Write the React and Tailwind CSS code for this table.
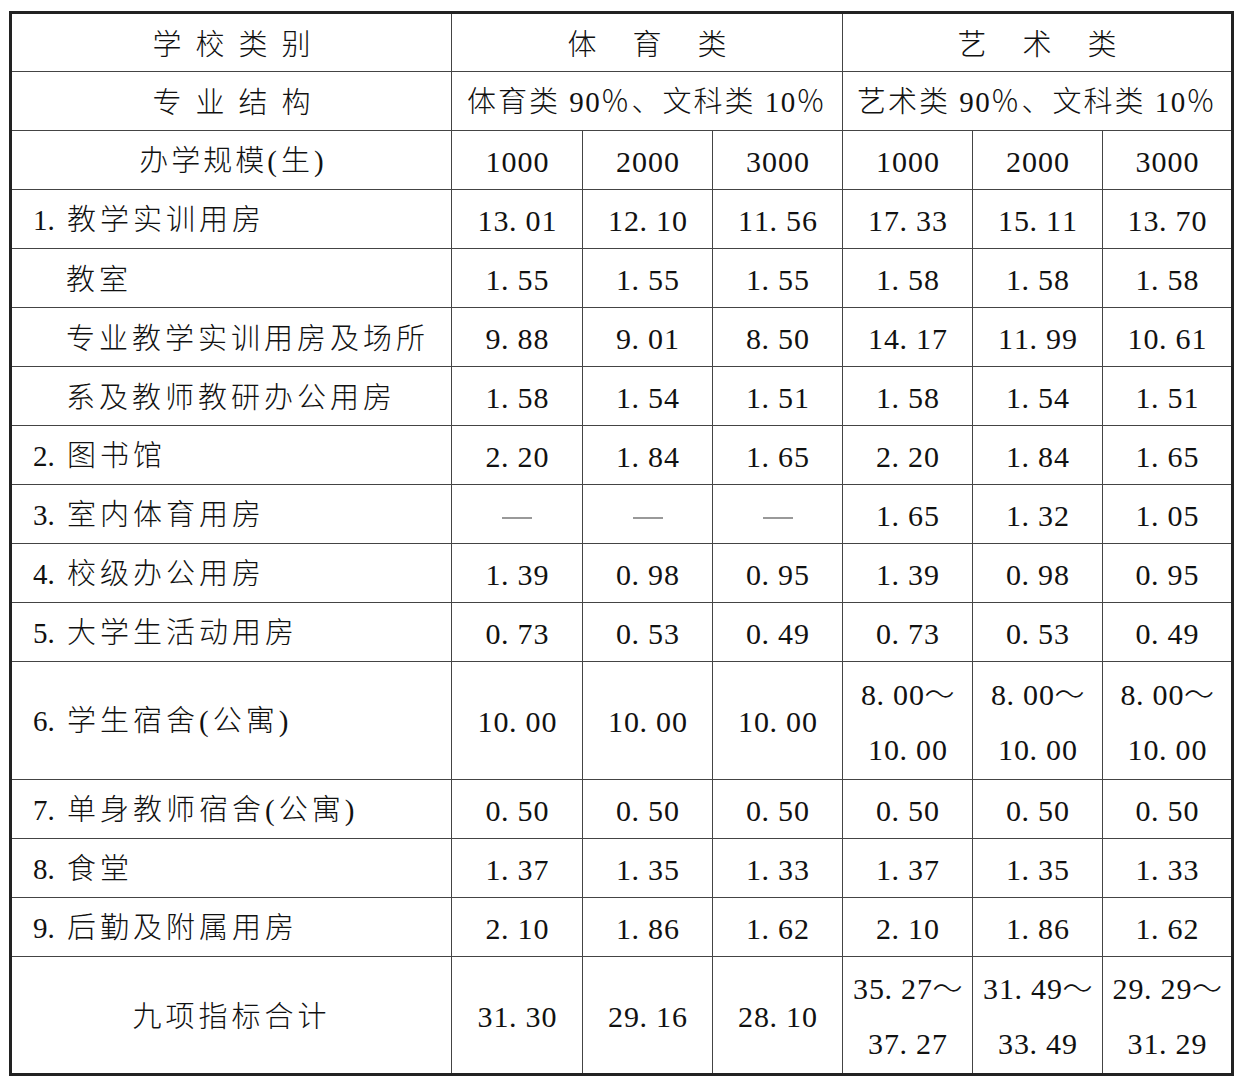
import React from "react";

// 每行数据: label, 缩进, 六个数值
const rows = [
  { no: "1.", label: "教学实训用房", v: ["13.01", "12.10", "11.56", "17.33", "15.11", "13.70"] },
  { label: "教室", indent: true, v: ["1.55", "1.55", "1.55", "1.58", "1.58", "1.58"] },
  { label: "专业教学实训用房及场所", indent: true, v: ["9.88", "9.01", "8.50", "14.17", "11.99", "10.61"] },
  { label: "系及教师教研办公用房", indent: true, v: ["1.58", "1.54", "1.51", "1.58", "1.54", "1.51"] },
  { no: "2.", label: "图书馆", v: ["2.20", "1.84", "1.65", "2.20", "1.84", "1.65"] },
  { no: "3.", label: "室内体育用房", v: ["-", "-", "-", "1.65", "1.32", "1.05"] },
  { no: "4.", label: "校级办公用房", v: ["1.39", "0.98", "0.95", "1.39", "0.98", "0.95"] },
  { no: "5.", label: "大学生活动用房", v: ["0.73", "0.53", "0.49", "0.73", "0.53", "0.49"] },
  {
    no: "6.",
    label: "学生宿舍",
    paren: "公寓",
    tall: true,
    v: ["10.00", "10.00", "10.00", ["8.00～", "10.00"], ["8.00～", "10.00"], ["8.00～", "10.00"]],
  },
  { no: "7.", label: "单身教师宿舍", paren: "公寓", v: ["0.50", "0.50", "0.50", "0.50", "0.50", "0.50"] },
  { no: "8.", label: "食堂", v: ["1.37", "1.35", "1.33", "1.37", "1.35", "1.33"] },
  { no: "9.", label: "后勤及附属用房", v: ["2.10", "1.86", "1.62", "2.10", "1.86", "1.62"] },
];

const serif = "[font-family:'Liberation_Serif',serif] font-normal";

const Num = ({ text }) => (
  <span className={`inline-flex items-baseline tracking-normal ${serif}`}>
    {text.split("").map((c, i) =>
      c === "～" ? (
        <span key={i} className="[font-family:'Noto_Sans_CJK_SC',sans-serif] font-light">～</span>
      ) : c === "." ? (
        <span key={i} className="inline-block w-[16px] text-left">.</span>
      ) : (
        <span key={i} className="inline-block w-[16px] text-center">{c}</span>
      )
    )}
  </span>
);

const Value = ({ v }) => {
  if (v === "-") return <span className="inline-block w-[30px] h-[2px] bg-[#999] align-middle" />;
  if (Array.isArray(v))
    return (
      <div className="flex flex-col items-center gap-[10px] leading-[45px]">
        <Num text={v[0]} />
        <Num text={v[1]} />
      </div>
    );
  return <Num text={v} />;
};

const Paren = ({ text }) => (
  <span className="tracking-[4px]">
    <span className={`tracking-normal mr-[4px] ${serif}`}>(</span>
    {text}
    <span className={`tracking-normal ${serif}`}>)</span>
  </span>
);

const td = "border border-[#444] text-center align-middle p-0";

export default function App() {
  return (
    <div className="bg-white w-[1238px] h-[1081px] pt-[11px] pl-[9px] text-[#111] [font-family:'Noto_Sans_CJK_SC',sans-serif] text-[30px] font-light">
      <table className="table-fixed border-collapse border-[3px] border-[#222] w-[1222px]">
        <colgroup>
          <col className="w-[441px]" />
          <col className="w-[131px]" />
          <col className="w-[130px]" />
          <col className="w-[130px]" />
          <col className="w-[130px]" />
          <col className="w-[130px]" />
          <col className="w-[130px]" />
        </colgroup>
        <tbody>
          <tr className="h-[59px]">
            <td className={`${td} text-[29px] tracking-[14px] pl-[14px]`}>学校类别</td>
            <td colSpan={3} className={`${td} text-[29px] tracking-[36px] pl-[36px]`}>体育类</td>
            <td colSpan={3} className={`${td} text-[29px] tracking-[36px] pl-[36px]`}>艺术类</td>
          </tr>
          <tr className="h-[59px]">
            <td className={`${td} text-[29px] tracking-[14px] pl-[14px]`}>专业结构</td>
            <td colSpan={3} className={`${td} text-[29px] tracking-[2px]`}>
              体育类 <Num text="90" />％、文科类 <Num text="10" />％
            </td>
            <td colSpan={3} className={`${td} text-[29px] tracking-[2px]`}>
              艺术类 <Num text="90" />％、文科类 <Num text="10" />％
            </td>
          </tr>
          <tr className="h-[59px]">
            <td className={`${td} text-[29px] tracking-[3px]`}>
              办学规模<Paren text="生" />
            </td>
            {["1000", "2000", "3000", "1000", "2000", "3000"].map((n, i) => (
              <td key={i} className={td}>
                <Num text={n} />
              </td>
            ))}
          </tr>
          {rows.map((r, ri) => (
            <tr key={ri} className={r.tall ? "h-[118px]" : "h-[59px]"}>
              <td className={`${td} text-left text-[29px] tracking-[4px] ${r.indent ? "pl-[54px]" : "pl-[19px]"}`}>
                {r.no && (
                  <span className={`inline-block w-[36px] pl-[2px] tracking-normal ${serif}`}>{r.no}</span>
                )}
                {r.label}
                {r.paren && <Paren text={r.paren} />}
              </td>
              {r.v.map((v, i) => (
                <td key={i} className={td}>
                  <Value v={v} />
                </td>
              ))}
            </tr>
          ))}
          <tr className="h-[118px]">
            <td className={`${td} text-[29px] tracking-[4px]`}>九项指标合计</td>
            {["31.30", "29.16", "28.10", ["35.27～", "37.27"], ["31.49～", "33.49"], ["29.29～", "31.29"]].map((v, i) => (
              <td key={i} className={td}>
                <Value v={v} />
              </td>
            ))}
          </tr>
        </tbody>
      </table>
    </div>
  );
}
